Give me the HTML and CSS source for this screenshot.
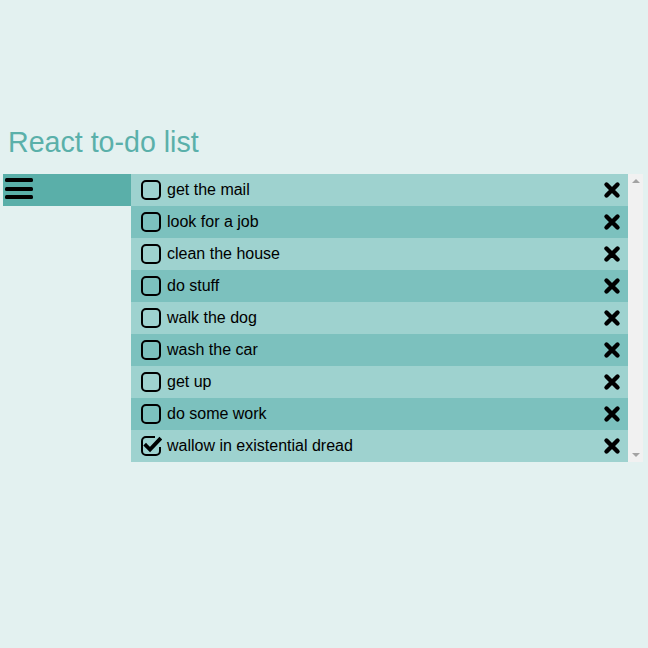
FILE: index.html
```html
<!DOCTYPE html>
<html>
<head>
<meta charset="utf-8">
<link rel="stylesheet" href="styles.css">
</head>
<body>
<div class="app">
  <h1 class="title">React to-do list</h1>
  <div class="board">
    <div class="sidebar">
      <svg class="menu" width="32" height="28" viewBox="0 0 32 28"><rect x="2" y="4" width="28" height="4" rx="1.5"/><rect x="2" y="13" width="28" height="4" rx="1.5"/><rect x="2" y="21" width="28" height="4" rx="1.5"/></svg>
    </div>
    <ul class="list">
      <li class="row"><svg class="box" width="22" height="22" viewBox="0 0 22 22"><rect x="2" y="2" width="18" height="18" rx="4"/></svg><span class="label">get the mail</span><svg class="del" width="18" height="18" viewBox="0 0 18 18"><path d="M3.5 3.5 L14.5 14.5 M14.5 3.5 L3.5 14.5"/></svg></li>
      <li class="row"><svg class="box" width="22" height="22" viewBox="0 0 22 22"><rect x="2" y="2" width="18" height="18" rx="4"/></svg><span class="label">look for a job</span><svg class="del" width="18" height="18" viewBox="0 0 18 18"><path d="M3.5 3.5 L14.5 14.5 M14.5 3.5 L3.5 14.5"/></svg></li>
      <li class="row"><svg class="box" width="22" height="22" viewBox="0 0 22 22"><rect x="2" y="2" width="18" height="18" rx="4"/></svg><span class="label">clean the house</span><svg class="del" width="18" height="18" viewBox="0 0 18 18"><path d="M3.5 3.5 L14.5 14.5 M14.5 3.5 L3.5 14.5"/></svg></li>
      <li class="row"><svg class="box" width="22" height="22" viewBox="0 0 22 22"><rect x="2" y="2" width="18" height="18" rx="4"/></svg><span class="label">do stuff</span><svg class="del" width="18" height="18" viewBox="0 0 18 18"><path d="M3.5 3.5 L14.5 14.5 M14.5 3.5 L3.5 14.5"/></svg></li>
      <li class="row"><svg class="box" width="22" height="22" viewBox="0 0 22 22"><rect x="2" y="2" width="18" height="18" rx="4"/></svg><span class="label">walk the dog</span><svg class="del" width="18" height="18" viewBox="0 0 18 18"><path d="M3.5 3.5 L14.5 14.5 M14.5 3.5 L3.5 14.5"/></svg></li>
      <li class="row"><svg class="box" width="22" height="22" viewBox="0 0 22 22"><rect x="2" y="2" width="18" height="18" rx="4"/></svg><span class="label">wash the car</span><svg class="del" width="18" height="18" viewBox="0 0 18 18"><path d="M3.5 3.5 L14.5 14.5 M14.5 3.5 L3.5 14.5"/></svg></li>
      <li class="row"><svg class="box" width="22" height="22" viewBox="0 0 22 22"><rect x="2" y="2" width="18" height="18" rx="4"/></svg><span class="label">get up</span><svg class="del" width="18" height="18" viewBox="0 0 18 18"><path d="M3.5 3.5 L14.5 14.5 M14.5 3.5 L3.5 14.5"/></svg></li>
      <li class="row"><svg class="box" width="22" height="22" viewBox="0 0 22 22"><rect x="2" y="2" width="18" height="18" rx="4"/></svg><span class="label">do some work</span><svg class="del" width="18" height="18" viewBox="0 0 18 18"><path d="M3.5 3.5 L14.5 14.5 M14.5 3.5 L3.5 14.5"/></svg></li>
      <li class="row"><svg class="box" width="22" height="22" viewBox="0 0 22 22"><path class="frame" d="M15 2 H6 A4 4 0 0 0 2 6 V16 A4 4 0 0 0 6 20 H16 A4 4 0 0 0 20 16 V12"/><path class="tick" d="M6 10.5 L10 14.5 L19.5 4.5"/></svg><span class="label">wallow in existential dread</span><svg class="del" width="18" height="18" viewBox="0 0 18 18"><path d="M3.5 3.5 L14.5 14.5 M14.5 3.5 L3.5 14.5"/></svg></li>
    </ul>
    <div class="scrollbar">
      <span class="arrow up"></span>
      <span class="arrow down"></span>
    </div>
  </div>
</div>
</body>
</html>
```
FILE: styles.css
```css
html, body {
  margin: 0;
  padding: 0;
  background: #e3f1f0;
}
body {
  font-family: "Liberation Sans", Arial, sans-serif;
}
.app {
  padding: 0 5px 0 3px;
}
.title {
  margin: 0 0 14px 0;
  padding: 124px 0 0 5px;
  font-size: 28.6px;
  font-weight: normal;
  line-height: 36px;
  color: #5ab0aa;
}
.board {
  display: flex;
  align-items: flex-start;
}
.sidebar {
  width: 128px;
  height: 32px;
  background: #5aafa9;
  flex: none;
}
.menu {
  display: block;
  fill: #000;
}
.list {
  list-style: none;
  margin: 0;
  padding: 0;
  width: 497px;
  flex: none;
}
.row {
  height: 32px;
  display: flex;
  align-items: center;
  padding-left: 9px;
  padding-right: 5px;
  background: #9ed2cf;
  font-size: 16px;
  color: #000;
}
.row:nth-child(even) {
  background: #7cc1be;
}
.box {
  flex: none;
  fill: none;
  stroke: #000;
  stroke-width: 2;
}
.box .tick {
  stroke-width: 3.8;
  stroke-linecap: square;
  stroke-linejoin: miter;
}
.label {
  margin-left: 5px;
  flex: 1;
}
.del {
  flex: none;
  margin-right: 2px;
  fill: none;
  stroke: #000;
  stroke-width: 4.4;
  stroke-linecap: round;
}
.scrollbar {
  width: 15px;
  height: 288px;
  background: #f1f1f1;
  flex: none;
  display: flex;
  flex-direction: column;
  justify-content: space-between;
  align-items: center;
  padding: 5px 0;
  box-sizing: border-box;
}
.arrow {
  width: 0;
  height: 0;
  border-left: 4px solid transparent;
  border-right: 4px solid transparent;
}
.arrow.up {
  border-bottom: 4px solid #a3a3a3;
}
.arrow.down {
  border-top: 4px solid #a3a3a3;
}
```
